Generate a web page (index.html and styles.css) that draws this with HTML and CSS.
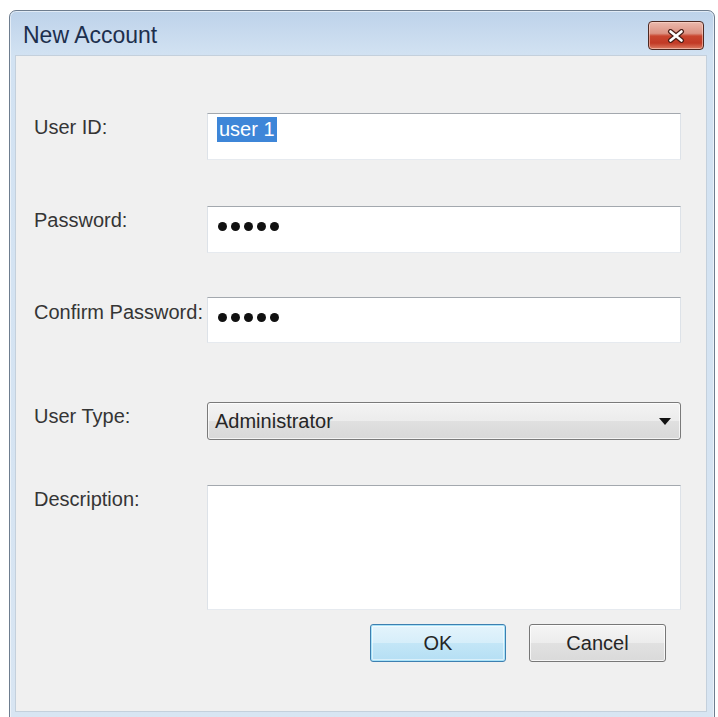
FILE: index.html
```html
<!DOCTYPE html>
<html lang="en">
<head>
<meta charset="utf-8">
<title>New Account</title>
<link rel="stylesheet" href="styles.css">
</head>
<body>
<div class="window">
  <div class="titlebar">
    <span class="title">New Account</span>
    <button class="close" aria-label="Close">
      <svg width="18" height="14" viewBox="0 0 18 14">
        <path d="M3.5 2.5 L14.5 11.5 M14.5 2.5 L3.5 11.5" stroke="#4a1d16" stroke-width="5" stroke-linecap="round" fill="none"/>
        <path d="M3.5 2.5 L14.5 11.5 M14.5 2.5 L3.5 11.5" stroke="#ffffff" stroke-width="2.6" stroke-linecap="round" fill="none"/>
      </svg>
    </button>
  </div>
  <div class="client">
    <div class="row row-userid">
      <span class="lbl">User ID:</span>
      <div class="field"><span class="sel">user 1</span></div>
    </div>
    <div class="row row-pass">
      <span class="lbl">Password:</span>
      <div class="field dots"><i></i><i></i><i></i><i></i><i></i></div>
    </div>
    <div class="row row-confirm">
      <span class="lbl lbl-confirm">Confirm Password:</span>
      <div class="field field-short dots"><i></i><i></i><i></i><i></i><i></i></div>
    </div>
    <div class="row row-type">
      <span class="lbl">User Type:</span>
      <div class="combo"><span class="combo-text">Administrator</span><span class="arrow"></span></div>
    </div>
    <div class="row row-desc">
      <span class="lbl">Description:</span>
      <div class="field area"></div>
    </div>
    <div class="buttons">
      <button class="btn btn-ok">OK</button>
      <button class="btn btn-cancel">Cancel</button>
    </div>
  </div>
</div>
</body>
</html>
```
FILE: styles.css
```css
* { box-sizing: border-box; }
html, body {
  margin: 0;
  padding: 0;
  background: #ffffff;
  overflow: hidden;
}
body {
  font-family: "Liberation Sans", Arial, sans-serif;
  width: 718px;
  height: 717px;
}
.window {
  margin: 10px 0 0 9px;
  width: 706px;
  height: 712px;
  border: 1px solid #6e7d8f;
  border-radius: 7px 7px 0 0;
  background: linear-gradient(to bottom, #bdd2ea 0, #d2e2f2 44px, #d8e5f2 100%);
  box-shadow: inset 0 0 0 1px rgba(255,255,255,0.55);
  padding: 0 7px 9px 5px;
  display: flex;
  flex-direction: column;
}
.titlebar {
  height: 44px;
  flex: none;
  display: flex;
  align-items: flex-start;
  justify-content: space-between;
  padding: 0 3px 0 8px;
}
.title {
  font-size: 23px;
  line-height: 40px;
  padding-top: 4px;
  color: #1d2f4d;
}
.close {
  margin-top: 10px;
  width: 56px;
  height: 29px;
  padding: 0;
  border: 1px solid #4d2922;
  border-radius: 4px;
  background: linear-gradient(to bottom, #ebb9ad 0%, #dc9282 42%, #c9452f 52%, #c23a26 78%, #dd7d63 100%);
  box-shadow: inset 0 0 0 1px rgba(255,220,210,0.55);
  display: flex;
  align-items: center;
  justify-content: center;
}
.close svg { display: block; }
.client {
  flex: 1;
  background: #f0f0f0;
  box-shadow: inset 0 0 0 1px #c4d0dc;
  padding: 58px 0 0 19px;
  display: flex;
  flex-direction: column;
}
.row {
  display: flex;
  align-items: flex-start;
}
.row-pass { margin-top: 46px; }
.row-confirm { margin-top: 44px; }
.row-type { margin-top: 59px; }
.row-desc { margin-top: 45px; }
.lbl {
  width: 173px;
  flex: none;
  font-size: 20px;
  line-height: 24px;
  padding-top: 2px;
  color: #353535;
  white-space: nowrap;
}
.lbl-confirm { padding-top: 3px; }
.field {
  width: 474px;
  height: 47px;
  background: #ffffff;
  border: 1px solid;
  border-color: #a3a8ae #dde2e8 #e6eaef #dde2e8;
}
.field-short { height: 46px; }
.sel {
  display: inline-block;
  margin: 3px 0 0 9px;
  padding: 0 2px;
  height: 25px;
  font-size: 20px;
  line-height: 25px;
  color: #ffffff;
  background: #3e86d8;
}
.dots {
  display: flex;
  align-items: center;
  gap: 4px;
  padding: 0 0 6px 10px;
}
.dots i {
  width: 9px;
  height: 9px;
  border-radius: 50%;
  background: #111111;
}
.combo {
  width: 474px;
  height: 38px;
  border: 1px solid #7a7a7a;
  border-radius: 3px;
  background: linear-gradient(to bottom, #f3f3f3 0%, #ececec 50%, #e0e0e0 51%, #d8d8d8 100%);
  box-shadow: inset 0 0 0 1px rgba(255,255,255,0.7);
  display: flex;
  align-items: center;
  justify-content: space-between;
  padding: 0 9px 0 7px;
}
.combo-text {
  font-size: 20px;
  line-height: 24px;
  color: #262626;
}
.arrow {
  width: 0;
  height: 0;
  border-left: 6px solid transparent;
  border-right: 6px solid transparent;
  border-top: 7px solid #111111;
}
.area { height: 125px; }
.buttons {
  margin-top: 14px;
  width: 647px;
  display: flex;
  justify-content: flex-end;
  gap: 23px;
  padding-right: 15px;
}
.btn {
  width: 136px;
  height: 38px;
  border-radius: 3px;
  font-family: "Liberation Sans", Arial, sans-serif;
  font-size: 20px;
  color: #252525;
  padding: 0;
}
.btn-ok {
  border: 1px solid #3d7fb0;
  background: linear-gradient(to bottom, #e4f4fc 0%, #d6eefa 50%, #c3e6f7 51%, #b5dff4 100%);
  box-shadow: inset 0 0 0 1px #a8e2f8, inset 0 0 0 2px rgba(255,255,255,0.5);
}
.btn-cancel {
  width: 137px;
  border: 1px solid #777777;
  background: linear-gradient(to bottom, #f5f5f5 0%, #ececec 50%, #e1e1e1 51%, #dadada 100%);
  box-shadow: inset 0 0 0 1px rgba(255,255,255,0.75);
}
```
